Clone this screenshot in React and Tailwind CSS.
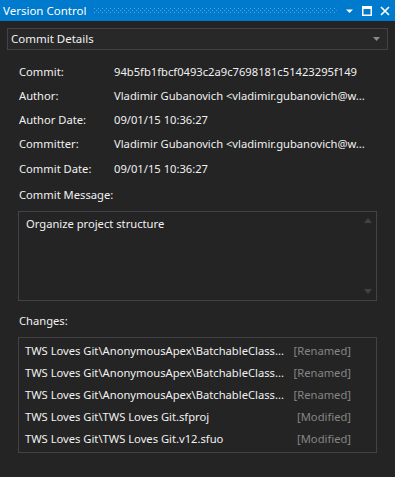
import React from "react";

const details = [
  ["Commit:", "94b5fb1fbcf0493c2a9c7698181c51423295f149"],
  ["Author:", "Vladimir Gubanovich <vladimir.gubanovich@w..."],
  ["Author Date:", "09/01/15 10:36:27"],
  ["Committer:", "Vladimir Gubanovich <vladimir.gubanovich@w..."],
  ["Commit Date:", "09/01/15 10:36:27"],
];

const changes = [
  ["TWS Loves Git\\AnonymousApex\\BatchableClass...", "[Renamed]"],
  ["TWS Loves Git\\AnonymousApex\\BatchableClass...", "[Renamed]"],
  ["TWS Loves Git\\AnonymousApex\\BatchableClass...", "[Renamed]"],
  ["TWS Loves Git\\TWS Loves Git.sfproj", "[Modified]"],
  ["TWS Loves Git\\TWS Loves Git.v12.sfuo", "[Modified]"],
];

const Grip = () => (
  <svg className="flex-1 h-[6px] mx-[8px]" preserveAspectRatio="none">
    <defs>
      <pattern id="grip" width="4" height="4" patternUnits="userSpaceOnUse">
        <rect x="0" y="0" width="1" height="1" fill="#5aa7dd" />
        <rect x="2" y="2" width="1" height="1" fill="#5aa7dd" />
      </pattern>
    </defs>
    <rect width="100%" height="100%" fill="url(#grip)" />
  </svg>
);

export default function App() {
  return (
    <div
      className="w-[395px] h-[477px] bg-[#242424] text-[#f1f1f1] text-[11.2px] overflow-hidden"
      style={{ fontFamily: '"Noto Sans", "Open Sans", sans-serif' }}
    >
      {/* title bar */}
      <div className="h-[21px] bg-[#007acc] flex items-center pl-[3px] pr-[5px] text-white">
        <span className="text-[11.5px] leading-none">Version Control</span>
        <Grip />
        <div className="flex items-center gap-[8px]">
          <svg width="9" height="6" viewBox="0 0 9 6">
            <path d="M1 1.5h7L4.5 5z" fill="#fff" />
          </svg>
          <svg width="10" height="10" viewBox="0 0 10 10">
            <rect x="0.75" y="0.75" width="8.5" height="8.5" fill="none" stroke="#fff" strokeWidth="1.5" />
            <rect x="0" y="0" width="10" height="3" fill="#fff" />
          </svg>
          <svg width="10" height="10" viewBox="0 0 10 10">
            <path d="M1 1l8 8M9 1L1 9" stroke="#fff" strokeWidth="1.7" />
          </svg>
        </div>
      </div>

      {/* view selector */}
      <div className="mx-[7px] mt-[7px] h-[22px] border border-[#434346] bg-[#282828] flex items-center pl-[3px] pr-[7px]">
        <span className="flex-1 text-[11.5px]">Commit Details</span>
        <svg width="7" height="4" viewBox="0 0 7 4">
          <path d="M0 0h7L3.5 4z" fill="#8a8a8a" />
        </svg>
      </div>

      {/* details */}
      <div className="px-[19px] pt-[10px]">
        {details.map(([label, value]) => (
          <div key={label} className="h-[24.25px] flex items-center whitespace-nowrap">
            <span className="w-[95px] shrink-0">{label}</span>
            <span>{value}</span>
          </div>
        ))}

        <div className="mt-[2px] h-[24px] flex items-center">Commit Message:</div>
        <div className="-ml-px mt-[4px] w-[359px] h-[90px] border border-[#434346] flex">
          <div className="flex-1 pl-[7px] pt-[4px]">Organize project structure</div>
          <div className="w-[16px] flex flex-col items-center justify-between py-[6px]">
            <svg width="8" height="5" viewBox="0 0 8 5">
              <path d="M0 5h8L4 0z" fill="#424246" />
            </svg>
            <svg width="8" height="5" viewBox="0 0 8 5">
              <path d="M0 0h8L4 5z" fill="#424246" />
            </svg>
          </div>
        </div>

        <div className="mt-[8px] h-[24px] flex items-center">Changes:</div>
        <div className="-ml-px mt-[4px] w-[359px] h-[116px] border border-[#434346] pt-[2px] pl-[6px] pr-[25px]">
          {changes.map(([path, status], i) => (
            <div key={i} className="h-[22px] flex items-center whitespace-nowrap">
              <span className="flex-1">{path}</span>
              <span className="text-[#858585] ml-[4px]">{status}</span>
            </div>
          ))}
        </div>
      </div>
    </div>
  );
}
